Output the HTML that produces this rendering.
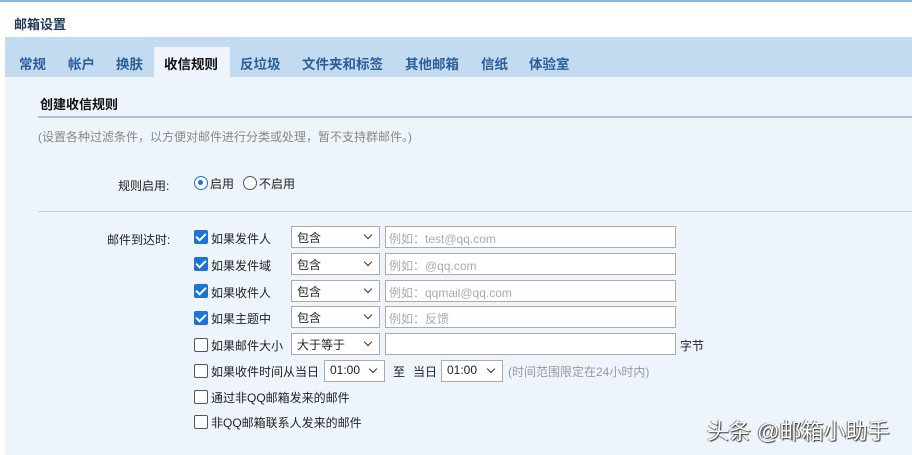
<!DOCTYPE html><html><head><meta charset="utf-8"><style>
*{margin:0;padding:0;box-sizing:border-box}
body{width:912px;height:455px;overflow:hidden;background:#fff;font-family:"Liberation Sans","Microsoft YaHei","Noto Sans CJK SC",sans-serif;font-size:12px;color:#222;position:relative}
.a{position:absolute;white-space:nowrap}
.cb{position:absolute;width:14px;height:14px;border-radius:2px}
.on{background:#1a73d9}
.on:after{content:"";position:absolute;left:4px;top:1px;width:4px;height:8px;border:solid #fff;border-width:0 2px 2px 0;transform:rotate(45deg)}
.off{background:#fff;border:1px solid #555}
.sel{position:absolute;height:22px;background:#fff;border:1px solid #aaa;padding:2px 5px;font-size:12px}
.sel:after{content:"";position:absolute;right:8px;top:5px;width:5px;height:5px;border:solid #333;border-width:0 1.5px 1.5px 0;transform:rotate(45deg)}
.inp{position:absolute;height:22px;background:#fff;border:1px solid #aaa;padding:3px 3px;color:#aaa;font-size:12px}
</style></head><body>
<div class="a" style="left:0;top:0;width:912px;height:2px;background:#8fb2dd"></div>
<div class="a" style="left:14px;top:14px;font-size:13px;font-weight:bold;color:#1f3a5c">邮箱设置</div>
<div class="a" style="left:5px;top:37px;width:907px;height:40px;background:#c3dbf1"></div>
<div class="a" style="left:5px;top:77px;width:907px;height:378px;background:#eef4fb"></div>
<div class="a" style="left:154px;top:47px;width:76px;height:30px;background:#eef4fb"></div>
<div class="a" style="left:0;top:53px;font-size:13.5px;font-weight:bold;color:#2b5f99">
<span class="a" style="left:19px">常规</span><span class="a" style="left:68px">帐户</span><span class="a" style="left:116px">换肤</span><span class="a" style="left:164px;color:#111">收信规则</span><span class="a" style="left:240px">反垃圾</span><span class="a" style="left:302px">文件夹和标签</span><span class="a" style="left:405px">其他邮箱</span><span class="a" style="left:481px">信纸</span><span class="a" style="left:529px">体验室</span></div>
<div class="a" style="left:40px;top:94px;font-size:13px;font-weight:bold;color:#111">创建收信规则</div>
<div class="a" style="left:38px;top:116px;width:874px;height:2px;background:#a9c3df"></div>
<div class="a" style="left:38px;top:128px;color:#888">(设置各种过滤条件，以方便对邮件进行分类或处理，暂不支持群邮件。)</div>
<div class="a" style="left:118px;top:177px">规则启用:</div>
<div class="a" style="left:194px;top:176px;width:14px;height:14px;border:1.5px solid #1a73d9;border-radius:50%;background:#fff"><div style="position:absolute;left:3px;top:3px;width:5px;height:5px;border-radius:50%;background:#1a73d9"></div></div>
<div class="a" style="left:210px;top:175px">启用</div>
<div class="a" style="left:243px;top:176px;width:14px;height:14px;border:1px solid #555;border-radius:50%;background:#fff"></div>
<div class="a" style="left:259px;top:175px">不启用</div>
<div class="a" style="left:38px;top:211px;width:874px;height:1px;background:#c8d3de"></div>
<div class="a" style="left:107px;top:231px">邮件到达时:</div>
<div class="cb on" style="left:194px;top:230px"></div><div class="a" style="left:211px;top:230px">如果发件人</div>
<div class="sel" style="left:291px;top:226px;width:89px">包含</div><div class="inp" style="left:385px;top:226px;width:291px">例如：test@qq.com</div>
<div class="cb on" style="left:194px;top:257px"></div><div class="a" style="left:211px;top:257px">如果发件域</div>
<div class="sel" style="left:291px;top:253px;width:89px">包含</div><div class="inp" style="left:385px;top:253px;width:291px">例如：@qq.com</div>
<div class="cb on" style="left:194px;top:284px"></div><div class="a" style="left:211px;top:284px">如果收件人</div>
<div class="sel" style="left:291px;top:280px;width:89px">包含</div><div class="inp" style="left:385px;top:280px;width:291px">例如：qqmail@qq.com</div>
<div class="cb on" style="left:194px;top:311px"></div><div class="a" style="left:211px;top:310px">如果主题中</div>
<div class="sel" style="left:291px;top:306px;width:89px">包含</div><div class="inp" style="left:385px;top:306px;width:291px">例如：反馈</div>
<div class="cb off" style="left:194px;top:338px"></div><div class="a" style="left:211px;top:337px">如果邮件大小</div>
<div class="sel" style="left:291px;top:333px;width:89px">大于等于</div><div class="inp" style="left:385px;top:333px;width:291px"></div>
<div class="a" style="left:680px;top:337px">字节</div>
<div class="cb off" style="left:194px;top:364px"></div><div class="a" style="left:211px;top:363px">如果收件时间从当日</div>
<div class="sel" style="left:324px;top:360px;width:61px">01:00</div>
<div class="a" style="left:393px;top:363px">至</div><div class="a" style="left:413px;top:363px">当日</div>
<div class="sel" style="left:441px;top:360px;width:62px">01:00</div>
<div class="a" style="left:508px;top:363px;color:#999">(时间范围限定在24小时内)</div>
<div class="cb off" style="left:194px;top:390px"></div><div class="a" style="left:211px;top:389px">通过非QQ邮箱发来的邮件</div>
<div class="cb off" style="left:194px;top:415px"></div><div class="a" style="left:211px;top:414px">非QQ邮箱联系人发来的邮件</div>
<div class="a" style="left:707px;top:414px;font-size:22px;color:#fff;text-shadow:1px 1px 1px #333,-1px 0 1px #666">头条 @邮箱小助手</div>
</body></html>
